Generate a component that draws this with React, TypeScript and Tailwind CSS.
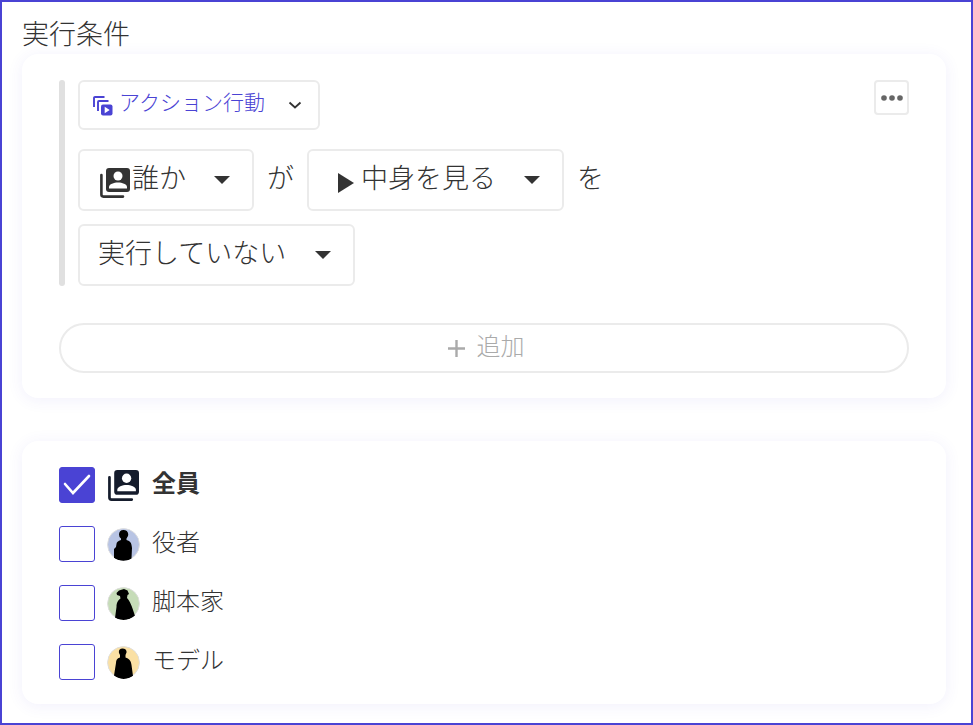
import { useState } from 'react';

const roles = [
  { id: 'actor', label: '役者', color: '#b8c4e4', body: 'M16.500 2C13.500 2 12 4 12 6.500L12.500 9L14 10.500V12C11 13 9.500 14 9.500 16L9 19L7 21V30C12 33.500 20 33.500 24.500 30.500L25 20C24.500 15 23.500 13 19.500 12V10.500L21 8C22 4 19.500 2 16.500 2Z' },
  { id: 'writer', label: '脚本家', color: '#c6dcb8', body: 'M12 3.500L17 2L20.500 3.500L22 7L20.500 8L20 11C23 14 25 19 28 29C23 33.500 14 34 8 31L9.500 20C9.500 15 11.500 13 13.500 11.500L13 9L10 8L9.500 6Z' },
  { id: 'model', label: 'モデル', color: '#fae0a4', body: 'M15.500 2.500C12.500 2.500 11.500 4.500 12 7L13 9V11.500C10 12.500 9 14 9 17L7 29.500C13 34 20 34 26 30L24.500 19C24 14.500 22 12.500 18.500 11.500V9L19.500 6.500C20 4 18 2.500 15.500 2.500Z' },
];

function PeopleIcon({ className = '' }: { className?: string }) {
  return (
    <svg viewBox="0 0 30 30" className={className} aria-hidden="true">
      <path d="M1.400 7v19.600a2 2 0 0 0 2 2H23" fill="none" stroke="currentColor" strokeWidth="2.600" strokeLinecap="round" />
      <rect x="6" y="0" width="24" height="24" rx="3" fill="currentColor" />
      <circle cx="18" cy="8" r="4.500" fill="white" />
      <path d="M9 20.600V19C9 16 14 14.400 18 14.400S27 16 27 19V20.600Z" fill="white" />
    </svg>
  );
}

function ActionIcon() {
  return (
    <svg viewBox="0 0 20 20" className="absolute left-[15px] top-4 size-5 text-[#4a43d4] pointer-events-none" aria-hidden="true">
      <path d="M1 11V2a1 1 0 0 1 1-1h9.500M5 15V6a1 1 0 0 1 1-1h9.500" fill="none" stroke="currentColor" strokeWidth="1.900" />
      <rect x="8" y="8.500" width="11.500" height="11" rx="2" fill="currentColor" />
      <path d="M11.700 10.800v6.400l5-3.200z" fill="white" />
    </svg>
  );
}

function Caret() {
  return (
    <svg viewBox="0 0 16 8" className="absolute right-6 top-1/2 -translate-y-1/2 w-4 h-2 text-[#333] pointer-events-none" aria-hidden="true">
      <path d="M0 0h16L8 8z" fill="currentColor" />
    </svg>
  );
}

export default function App() {
  const [checked, setChecked] = useState<string[]>(['all']);

  const toggle = (id: string) => {
    setChecked((prev) => (prev.includes(id) ? prev.filter((v) => v !== id) : [...prev, id]));
  };

  const checkbox = (id: string) => (
    <span className="relative flex">
      <input
        type="checkbox"
        checked={checked.includes(id)}
        onChange={() => toggle(id)}
        className="peer size-9 appearance-none rounded-[3px] border border-[#4a43d4] bg-white checked:bg-[#4a43d4]"
      />
      <svg viewBox="0 0 36 36" className="absolute inset-0 size-9 hidden peer-checked:block pointer-events-none" aria-hidden="true">
        <path d="M6 17l8 9L30 9" fill="none" stroke="white" strokeWidth="2.600" strokeLinecap="round" />
      </svg>
    </span>
  );

  return (
    <main className="min-h-screen border-2 border-[#4a43d4] bg-white pl-5 pr-[25px] pt-[11px] pb-[18px] font-['Noto_Sans_CJK_JP',sans-serif] font-light text-[#333]">
      <h1 className="pb-px text-[27px] leading-10 font-light">実行条件</h1>

      <section className="rounded-2xl bg-white px-[37px] pt-[26px] pb-[25px] shadow-[0_2px_16px_rgba(74,67,212,0.08)]">
        <div className="flex items-start">
          <div className="w-1.5 self-stretch rounded-full bg-[#e0e0e0]" />
          <div className="flex-1 pl-[13px]">
            <div className="relative w-fit">
              <ActionIcon />
              <select aria-label="条件の種類" className="h-[50px] appearance-none rounded-md border-2 border-[#ebebeb] bg-white pl-[39px] pr-[52px] pb-1.5 text-[21px] text-[#4a43d4]">
                <option>アクション行動</option>
              </select>
              <svg viewBox="0 0 14 8" className="absolute right-[18px] top-[21px] w-3.5 h-2 pointer-events-none" aria-hidden="true">
                <path d="M1.500 1.500L7 6.500l5.500-5" fill="none" stroke="currentColor" strokeWidth="1.800" />
              </svg>
            </div>

            <div className="mt-[19px] flex flex-wrap items-center gap-[13px] text-[27px]">
              <div className="relative">
                <PeopleIcon className="absolute left-[22px] top-[19px] size-[30px] pointer-events-none" />
                <select aria-label="対象" className="h-[62px] appearance-none rounded-md border-2 border-[#ebebeb] bg-white pl-[52px] pr-[66px] pb-1.5">
                  <option>誰か</option>
                </select>
                <Caret />
              </div>
              <span className="pb-1.5">が</span>
              <div className="relative">
                <svg viewBox="0 0 16 20" className="absolute left-[31px] top-6 w-4 h-5 pointer-events-none" aria-hidden="true">
                  <path d="M0 0v20l16-10z" fill="currentColor" />
                </svg>
                <select aria-label="行動" className="h-[62px] appearance-none rounded-md border-2 border-[#ebebeb] bg-white pl-[52px] pr-[66px] pb-1.5">
                  <option>中身を見る</option>
                </select>
                <Caret />
              </div>
              <span className="pb-1.5">を</span>
              <div className="relative">
                <select aria-label="状態" className="h-[62px] appearance-none rounded-md border-2 border-[#ebebeb] bg-white pl-[18px] pr-[66px] pb-1.5">
                  <option>実行していない</option>
                </select>
                <Caret />
              </div>
            </div>
          </div>

          <button type="button" aria-label="メニュー" className="flex size-[35px] items-center justify-center rounded-sm border-2 border-[#ebebeb] bg-white">
            <svg viewBox="0 0 22 6" className="w-[22px] h-1.5" fill="#666" aria-hidden="true">
              <circle cx="3" cy="3" r="2.800" />
              <circle cx="11" cy="3" r="2.800" />
              <circle cx="19" cy="3" r="2.800" />
            </svg>
          </button>
        </div>

        <button type="button" className="mt-[37px] flex h-[50px] w-full items-center justify-center gap-3 rounded-full border-2 border-[#ebebeb] pl-1 text-[24px] text-[#aaa]">
          <svg viewBox="0 0 17 17" className="size-[17px]" aria-hidden="true">
            <path d="M8.500 0v17M0 8.500h17" stroke="currentColor" strokeWidth="2.400" />
          </svg>
          <span className="pb-1.5">追加</span>
        </button>
      </section>

      <section className="mt-[43px] flex flex-col gap-[23px] rounded-2xl bg-white px-[37px] pt-[26px] pb-6 shadow-[0_2px_16px_rgba(74,67,212,0.08)]">
        <label className="flex h-9 w-fit items-center gap-3 text-[24px]">
          {checkbox('all')}
          <PeopleIcon className="size-[33px] p-px text-[#151c2c]" />
          <span className="pb-1.5 font-bold">全員</span>
        </label>
        {roles.map((role) => (
          <label key={role.id} className="flex h-9 w-fit items-center gap-3 text-[24px]">
            {checkbox(role.id)}
            <svg viewBox="0 0 33 33" className="size-[33px] rounded-full" aria-hidden="true">
              <circle cx="16.500" cy="16.500" r="16" fill={role.color} stroke="#dedede" />
              <path d={role.body} fill="black" />
            </svg>
            <span className="pb-1.5">{role.label}</span>
          </label>
        ))}
      </section>
    </main>
  );
}
